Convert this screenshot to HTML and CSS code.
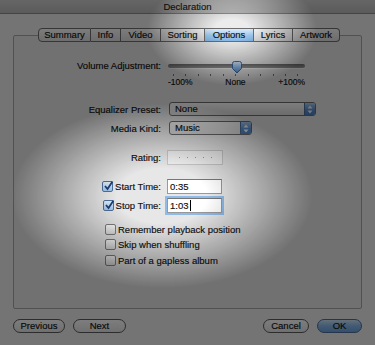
FILE: index.html
```html
<!DOCTYPE html>
<html lang="en">
<head>
    <meta charset="UTF-8">
    <title>Declaration - Options</title>
    <link rel="stylesheet" href="styles.css">
</head>
<body>
    <div class="window">
        <!-- title bar -->
        <div class="titlebar">Declaration</div>

        <div class="panel">
            <!-- tab strip -->
            <div class="tabs">
                <span class="tab">Summary</span>
                <span class="tab">Info</span>
                <span class="tab">Video</span>
                <span class="tab">Sorting</span>
                <span class="tab active">Options</span>
                <span class="tab">Lyrics</span>
                <span class="tab">Artwork</span>
            </div>

            <div class="group">
                <!-- volume slider -->
                <div class="row row-volume">
                    <span class="lbl">Volume Adjustment:</span>
                    <div class="slider">
                        <div class="track-wrap">
                            <div class="track"></div>
                            <svg class="thumb" width="12" height="13" viewBox="0 0 12 13">
                                <defs>
                                    <linearGradient id="tg" x1="0" y1="0" x2="0" y2="1">
                                        <stop offset="0" stop-color="#d6e8fa"/>
                                        <stop offset="0.5" stop-color="#8dbbeb"/>
                                        <stop offset="1" stop-color="#5a93d6"/>
                                    </linearGradient>
                                </defs>
                                <path d="M1.5 2.5 Q1.5 0.5 3.5 0.5 L8.5 0.5 Q10.5 0.5 10.5 2.5 L10.5 7.5 L6 12 L1.5 7.5 Z" fill="url(#tg)" stroke="#3d679e" stroke-width="1"/>
                            </svg>
                        </div>
                        <div class="ticks"></div>
                        <div class="scale">
                            <span>-100%</span>
                            <span>None</span>
                            <span>+100%</span>
                        </div>
                    </div>
                </div>

                <!-- popups -->
                <div class="row row-eq">
                    <span class="lbl">Equalizer Preset:</span>
                    <div class="popup popup-wide">
                        <span class="popup-text">None</span>
                        <span class="cap">
                            <svg width="6" height="9" viewBox="0 0 6 9"><path d="M3 0.5 L5.5 3.5 L0.5 3.5 Z M3 8.5 L5.5 5.5 L0.5 5.5 Z" fill="#f2f6fc"/></svg>
                        </span>
                    </div>
                </div>
                <div class="row row-kind">
                    <span class="lbl">Media Kind:</span>
                    <div class="popup popup-narrow">
                        <span class="popup-text">Music</span>
                        <span class="cap">
                            <svg width="6" height="9" viewBox="0 0 6 9"><path d="M3 0.5 L5.5 3.5 L0.5 3.5 Z M3 8.5 L5.5 5.5 L0.5 5.5 Z" fill="#f2f6fc"/></svg>
                        </span>
                    </div>
                </div>

                <!-- rating -->
                <div class="row row-rating">
                    <span class="lbl">Rating:</span>
                    <div class="rating">
                        <i></i><i></i><i></i><i></i><i></i>
                    </div>
                </div>

                <!-- start / stop -->
                <div class="row row-start">
                    <span class="lbl lbl-check">
                        <span class="cb on">
                            <svg width="11" height="10" viewBox="0 0 11 10"><path d="M2 5 L4.5 8 L9.5 0.5" fill="none" stroke="#1d3f75" stroke-width="1.8"/></svg>
                        </span>
                        Start Time:
                    </span>
                    <div class="field">0:35</div>
                </div>
                <div class="row row-stop">
                    <span class="lbl lbl-check">
                        <span class="cb on">
                            <svg width="11" height="10" viewBox="0 0 11 10"><path d="M2 5 L4.5 8 L9.5 0.5" fill="none" stroke="#1d3f75" stroke-width="1.8"/></svg>
                        </span>
                        Stop Time:
                    </span>
                    <div class="field focus"><span class="caret">1:03</span></div>
                </div>

                <!-- plain checkboxes -->
                <div class="checks">
                    <div class="check"><span class="cb"></span>Remember playback position</div>
                    <div class="check"><span class="cb"></span>Skip when shuffling</div>
                    <div class="check"><span class="cb"></span>Part of a gapless album</div>
                </div>
            </div>
        </div>

        <!-- bottom buttons -->
        <div class="buttons">
            <span class="btn btn-prev">Previous</span>
            <span class="btn btn-next">Next</span>
            <span class="btn btn-cancel">Cancel</span>
            <span class="btn btn-ok">OK</span>
        </div>

        <!-- spotlight overlay -->
        <div class="spot"></div>
    </div>
</body>
</html>
```

FILE: styles.css
```css
* {
    box-sizing: border-box;
}
body {
    margin: 0;
    font-family: "Liberation Sans", Arial, sans-serif;
    font-size: 9.5px;
    color: #111;
    -webkit-text-stroke: 0.15px #111;
}
.window {
    position: relative;
    width: 375px;
    height: 345px;
    overflow: hidden;
    background-color: #ececec;
}
.titlebar {
    height: 14px;
    line-height: 13px;
    text-align: center;
    color: #222;
    background: linear-gradient(#d0d0d0, #bababa);
    border-bottom: 1px solid #8c8c8c;
}
.panel {
    margin: 14px 13px 0;
}

/* tab strip */
.tabs {
    position: relative;
    z-index: 1;
    display: flex;
    justify-content: center;
    padding-left: 3px;
    height: 14px;
}
.tab {
    height: 14px;
    line-height: 12px;
    text-align: center;
    border: 1px solid #6e6e6e;
    border-left: none;
    background: linear-gradient(#fcfcfc, #dedede);
}
.tab:first-child {
    border-left: 1px solid #6e6e6e;
    border-radius: 4px 0 0 4px;
}
.tab:last-child {
    border-radius: 0 4px 4px 0;
}
.tab:nth-child(1) { width: 53px; }
.tab:nth-child(2) { width: 30px; }
.tab:nth-child(3) { width: 40px; }
.tab:nth-child(4) { width: 44px; }
.tab:nth-child(5) { width: 49px; }
.tab:nth-child(6) { width: 39px; }
.tab:nth-child(7) { width: 47px; }
.tab.active {
    background: linear-gradient(#dcecfb, #9cc8ef 55%, #86b9e8);
}

/* group box */
.group {
    margin-top: -7px;
    height: 274px;
    padding-top: 23px;
    border: 1px solid #a6a6a6;
    border-radius: 2px;
    background-color: #e7e7e7;
}
.row {
    display: grid;
    grid-template-columns: 147px auto;
    column-gap: 6px;
    align-items: center;
}
.lbl {
    text-align: right;
}
.row-volume {
    align-items: start;
}
.row-volume .lbl {
    line-height: 14px;
}
.row-eq { margin-top: 15px; }
.row-kind { margin-top: 5px; }
.row-rating { margin-top: 15px; }
.row-start { margin-top: 14px; }
.row-stop { margin-top: 4px; }

/* slider */
.slider {
    width: 137px;
    margin-left: 1px;
}
.track-wrap {
    position: relative;
    height: 14px;
    padding-top: 5px;
}
.track {
    height: 4px;
    border-radius: 2px;
    background: linear-gradient(#6c6c6c, #9a9a9a);
    box-shadow: 0 1px 0 #f6f6f6;
}
.thumb {
    position: absolute;
    left: 63px;
    top: 2px;
}
.ticks {
    height: 2px;
    width: 127px;
    margin: 1px 0 0 5px;
    background: repeating-linear-gradient(to right, #707070 0 1px, transparent 1px 12.45px);
}
.scale {
    display: flex;
    justify-content: space-between;
    margin-top: 2px;
    line-height: 9px;
    font-size: 8.5px;
}

/* popup buttons */
.popup {
    display: flex;
    height: 14px;
    margin-left: 2px;
    border: 1px solid #6c6c6c;
    border-radius: 3px;
    overflow: hidden;
    background: linear-gradient(#ffffff, #ececec 50%, #dcdcdc);
}
.popup-wide { width: 147px; }
.popup-narrow { width: 83px; }
.popup-text {
    flex: 1;
    padding-left: 5px;
    line-height: 12px;
}
.cap {
    width: 11px;
    display: flex;
    align-items: center;
    justify-content: center;
    border-left: 1px solid #4d6f9c;
    background: linear-gradient(#a9cdf2, #5b90d2 55%, #4a7fc4);
}

/* rating */
.rating {
    width: 56px;
    height: 15px;
    display: flex;
    align-items: center;
    justify-content: center;
    gap: 7px;
    border: 1px solid #c9c9c9;
    background-color: #f2f2f2;
}
.rating i {
    width: 1px;
    height: 1px;
    background-color: #9a9a9a;
}

/* checkboxes */
.lbl-check {
    display: flex;
    justify-content: flex-end;
    align-items: center;
    gap: 2px;
}
.cb {
    position: relative;
    width: 11px;
    height: 11px;
    flex-shrink: 0;
    border: 1px solid #7f7f7f;
    border-radius: 2px;
    background: linear-gradient(#ffffff, #e0e0e0);
}
.cb.on {
    border-color: #4f7199;
    background: linear-gradient(#e2effc, #9fc7ee);
}
.cb svg {
    position: absolute;
    left: 0;
    top: -1px;
}
.field {
    width: 55px;
    height: 15px;
    line-height: 13px;
    padding-left: 2px;
    border: 1px solid #999;
    border-top-color: #777;
    background-color: #fff;
}
.field.focus {
    box-shadow: 0 0 0 2px #8fbbe8;
}
.caret {
    padding-right: 1px;
    border-right: 1px solid #000;
}
.checks {
    margin-top: 8.5px;
    padding-left: 91px;
}
.check {
    display: flex;
    align-items: center;
    gap: 2px;
    height: 15.5px;
}

/* bottom buttons */
.buttons {
    display: flex;
    gap: 8px;
    padding: 10px 13px 0;
}
.btn {
    height: 14px;
    line-height: 12px;
    text-align: center;
    border: 1px solid #5c5c5c;
    border-radius: 7px;
    background: linear-gradient(#ffffff, #e4e4e4);
}
.btn-prev { width: 52px; }
.btn-next { width: 53px; }
.btn-cancel { width: 46px; margin-left: auto; }
.btn-ok {
    width: 45px;
    border-color: #4a6d9c;
    background: linear-gradient(#cfe4f9, #88b8ea 50%, #6aa1df);
}

/* spotlight: darken everything outside two bright spots */
.spot {
    position: absolute;
    inset: 0;
    z-index: 2;
    pointer-events: none;
    background-color: rgba(0, 0, 0, 0.51);
    -webkit-mask-image:
        radial-gradient(ellipse 150px 92px at 162px 196px, transparent 30%, #000 100%),
        radial-gradient(ellipse 85px 55px at 232px 30px, transparent 20%, #000 100%);
    -webkit-mask-composite: source-in;
    mask-image:
        radial-gradient(ellipse 150px 92px at 162px 196px, transparent 30%, #000 100%),
        radial-gradient(ellipse 85px 55px at 232px 30px, transparent 20%, #000 100%);
    mask-composite: intersect;
}
```
